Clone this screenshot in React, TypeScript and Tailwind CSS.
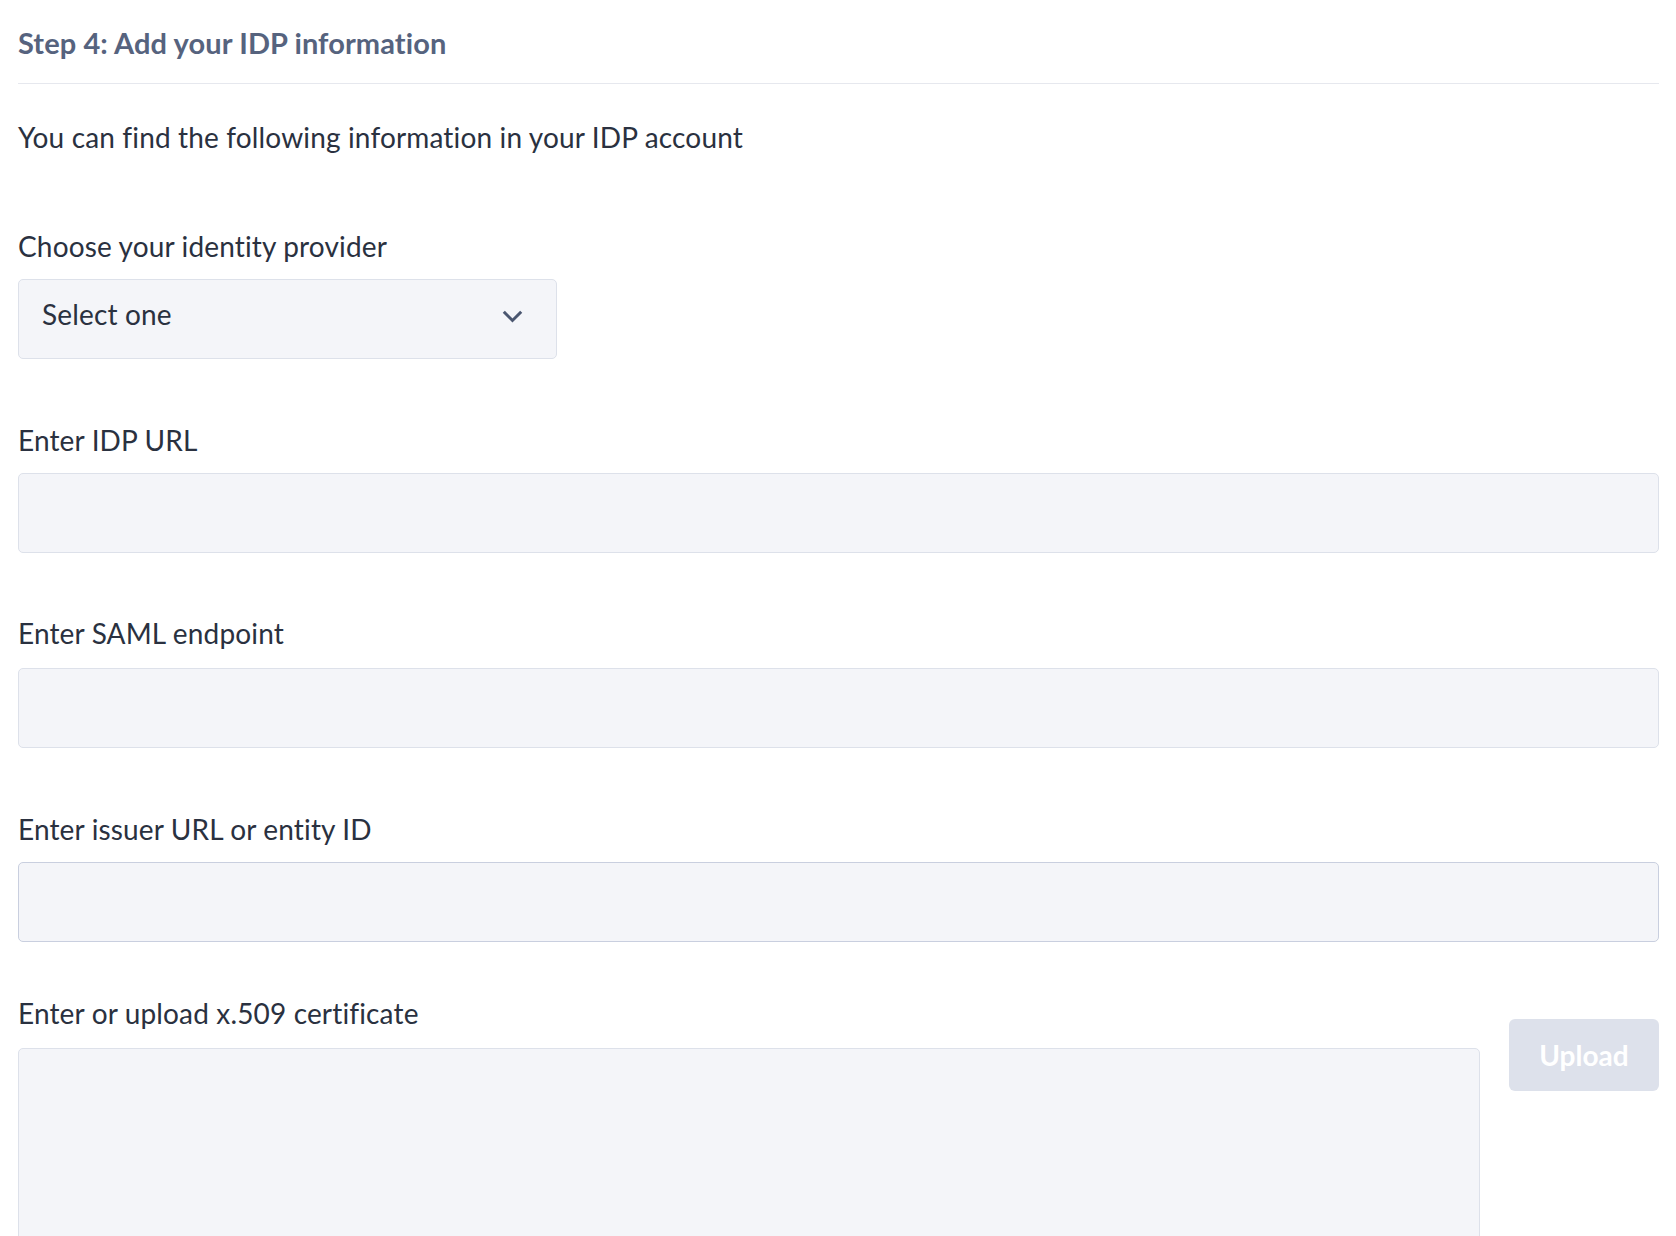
const inputBox =
  "block h-[80px] w-full rounded-[5px] border border-[#dde1ea] bg-[#f4f5f9]";

function Label({ children, className = "" }: { children: React.ReactNode; className?: string }) {
  return (
    <div className={`text-[28px] leading-[32px] tracking-[0.15px] text-[#2a3140] ${className}`}>
      {children}
    </div>
  );
}

export default function App() {
  return (
    <div className="min-h-screen bg-white pl-[18px] pr-[17px] font-['Lato',sans-serif]">
      <h2 className="pt-[27px] text-[29px] font-bold leading-[32px] tracking-[0.1px] text-[#56637e]">
        Step 4: Add your IDP information
      </h2>
      <div className="mt-[24px] h-px bg-[#e6e8ee]" />

      <p className="mt-[37px] text-[28px] leading-[32px] tracking-[0.15px] text-[#2a3140]">
        You can find the following information in your IDP account
      </p>

      <Label className="mt-[77px]">Choose your identity provider</Label>
      <button className="mt-[17px] flex h-[80px] w-[539px] items-center justify-between rounded-[5px] border border-[#dde1ea] bg-[#f4f5f9] pl-[23px] pr-[33px] text-left">
        <span className="mb-[10px] text-[28px] leading-[32px] tracking-[0.15px] text-[#2a3140]">Select one</span>
        <svg width="21" height="13" viewBox="0 0 21 13" fill="none" className="-mt-[5px]">
          <polyline points="1.8,1.8 10.5,10.5 19.2,1.8" stroke="#4a5670" strokeWidth="3" strokeLinejoin="miter" />
        </svg>
      </button>

      <Label className="mt-[65px]">Enter IDP URL</Label>
      <input className={`mt-[17px] ${inputBox}`} />

      <Label className="mt-[64px]">Enter SAML endpoint</Label>
      <input className={`mt-[19px] ${inputBox}`} />

      <Label className="mt-[65px]">Enter issuer URL or entity ID</Label>
      <input className="mt-[17px] block h-[80px] w-full rounded-[5px] border border-[#c9cfdf] bg-[#f4f5f9]" />

      <div className="mt-[55px] flex items-start">
        <div className="flex-1">
          <Label>Enter or upload x.509 certificate</Label>
          <textarea className="mt-[19px] block h-[240px] w-full resize-none rounded-[5px] border border-[#dde1ea] bg-[#f4f5f9]" />
        </div>
        <button className="ml-[29px] mt-[22px] h-[72px] w-[150px] shrink-0 rounded-[6px] bg-[#dde1eb] text-[28px] font-bold text-white">
          Upload
        </button>
      </div>
    </div>
  );
}
